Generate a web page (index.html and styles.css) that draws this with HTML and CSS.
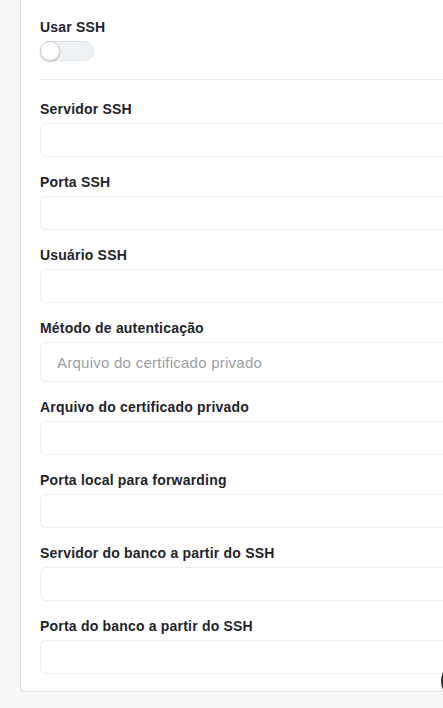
FILE: index.html
```html
<!DOCTYPE html>
<html lang="pt-BR">
<head>
	<meta charset="UTF-8">
	<meta name="viewport" content="width=device-width, initial-scale=1.0">
	<title>Configuração SSH</title>
	<link rel="stylesheet" href="styles.css">
</head>
<body>
	<div class="page">
		<div class="card">
			<div class="field">
				<label class="label">Usar SSH</label>
				<div class="switch"><span class="knob"></span></div>
			</div>
			<hr class="divider">

			<div class="field">
				<label class="label" for="ssh_host">Servidor SSH</label>
				<input class="input" id="ssh_host" type="text">
			</div>
			<div class="field">
				<label class="label" for="ssh_port">Porta SSH</label>
				<input class="input" id="ssh_port" type="text">
			</div>
			<div class="field">
				<label class="label" for="ssh_user">Usuário SSH</label>
				<input class="input" id="ssh_user" type="text">
			</div>
			<div class="field">
				<label class="label" for="ssh_auth">Método de autenticação</label>
				<select class="input select" id="ssh_auth">
					<option>Arquivo do certificado privado</option>
				</select>
			</div>
			<div class="field">
				<label class="label" for="ssh_key">Arquivo do certificado privado</label>
				<input class="input" id="ssh_key" type="text">
			</div>
			<div class="field">
				<label class="label" for="ssh_local">Porta local para forwarding</label>
				<input class="input" id="ssh_local" type="text">
			</div>
			<div class="field">
				<label class="label" for="ssh_dbhost">Servidor do banco a partir do SSH</label>
				<input class="input" id="ssh_dbhost" type="text">
			</div>
			<div class="field">
				<label class="label" for="ssh_dbport">Porta do banco a partir do SSH</label>
				<input class="input" id="ssh_dbport" type="text">
			</div>
		</div>
	</div>
	<div class="fab"></div>
</body>
</html>
```

FILE: styles.css
```css
html, body{
	margin: 0;
	padding: 0;
	background: #f7f8fa;
	overflow: hidden;
	font-family: "Liberation Sans", Arial, sans-serif;
}
.page{
	padding-left: 20px;
	width: 520px;
}
.card{
	width: 480px;
	background: #fff;
	border: 1px solid #dfe1e4;
	border-top: 0;
	border-radius: 0 0 4px 4px;
	box-shadow: 0 1px 1px rgba(0,0,0,0.07);
	padding: 17px 0 17px 19px;
}
.field{
	margin-bottom: 15px;
}
.field:last-child{
	margin-bottom: 0;
}
.label{
	display: block;
	font-size: 14px;
	line-height: 20px;
	font-weight: bold;
	letter-spacing: 0.2px;
	color: #222429;
	margin-bottom: 4px;
}
.switch{
	width: 52px;
	height: 18px;
	border: 1px solid #dde2e7;
	border-radius: 10px;
	background: #eef1f4;
	position: relative;
}
.knob{
	position: absolute;
	left: -1px;
	top: -1px;
	width: 18px;
	height: 18px;
	border-radius: 50%;
	background: #fff;
	border: 1px solid #c9ced3;
	box-shadow: 0 1px 2px rgba(0,0,0,0.2);
}
.divider{
	border: 0;
	border-top: 1px solid #e6e7e9;
	margin: 18px 0 19px 0;
}
.input{
	display: block;
	box-sizing: border-box;
	width: 440px;
	height: 34px;
	border: 1px solid #eceef1;
	border-radius: 6px;
	background: #fff;
	padding: 0 16px;
	font-family: "Liberation Sans", Arial, sans-serif;
	font-size: 15px;
	letter-spacing: 0.25px;
	color: #333;
	outline: none;
}
.select{
	height: 40px;
	color: #9a9ea4;
	-webkit-appearance: none;
	appearance: none;
}
.fab{
	position: absolute;
	left: 441px;
	top: 660px;
	width: 42px;
	height: 42px;
	border-radius: 50%;
	background: #2b2d31;
}
```
